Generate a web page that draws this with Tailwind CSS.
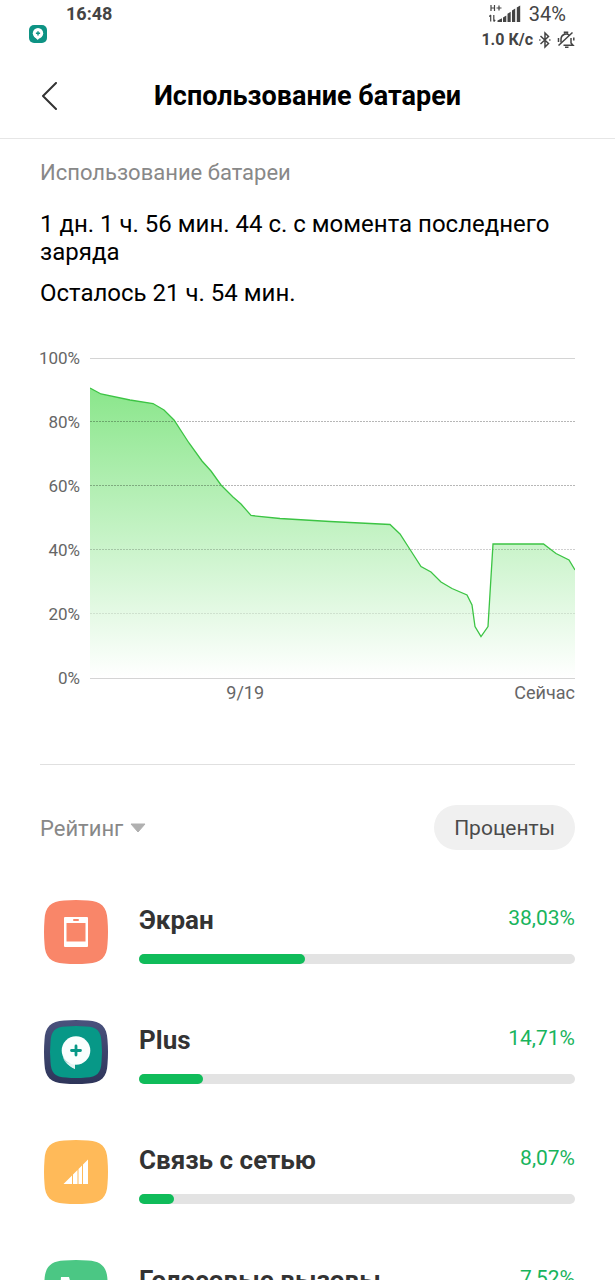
<!DOCTYPE html>
<html lang="ru">
<head>
  <meta charset="UTF-8" />
  <meta name="viewport" content="width=device-width, initial-scale=1" />
  <title>Использование батареи</title>
  <script src="https://cdn.jsdelivr.net/npm/@tailwindcss/browser@4"></script>
</head>
<body class="bg-white font-['Roboto',sans-serif] text-black h-screen flex flex-col overflow-hidden">

  <!-- Status bar -->
  <div class="flex justify-between pl-7 pr-10 pt-1 h-14 shrink-0 text-[#444]">
    <div>
      <p class="pl-[38px] text-lg leading-5 font-bold">16:48</p>
      <svg class="w-5 h-5" viewBox="0 0 20 20">
        <rect x="1" y="1" width="18" height="18" rx="5" fill="#0e9384" />
        <circle cx="10" cy="9.3" r="5.2" fill="#fff" />
        <path d="M6 12l3.7 4 2.5-3z" fill="#fff" />
        <path d="M10 7.2v4.2M7.9 9.3h4.2" stroke="#0e9384" stroke-width="1.4" />
      </svg>
    </div>
    <div class="flex flex-col items-end gap-1">
      <div class="flex items-center gap-2 pr-[9px]">
        <svg class="w-8 h-5" viewBox="0 0 32 20" fill="#444">
          <path d="M2 1v6M5.500 1v6M2 4h3.500M7.500 4h5M10 1.500v5" fill="none" stroke="#444" stroke-width="1.200" />
          <path d="M1.700 17.500V11M.3 12.700L1.700 11M4.800 11v6.500M6.200 15.800l-1.400 1.700" fill="none" stroke="#444" stroke-width="1.200" />
          <path d="M8.500 18v-1.500l4.500-2.300V18zM14 18v-4.500l3.300-2V18zM18.500 18V9.800l3.200-2V18zM23 18V6.500l3.200-2V18zM27.800 18V3.500l3.400-2V18z" />
        </svg>
        <span class="text-xl leading-5">34%</span>
      </div>
      <div class="flex items-center">
        <span class="text-base leading-6 font-bold">1.0 К/с</span>
        <svg class="ml-1 w-4 h-5" viewBox="0 0 16 20" fill="none" stroke="#444" stroke-width="1.5">
          <path d="M3.5 6l8 7.500L8 17V3l3.500 3.500-8 7.500" />
          <path d="M2.800 10h.1M12.800 10h.1" stroke-linecap="round" stroke-width="1.600" />
        </svg>
        <svg class="w-[18px] h-5 ml-1" viewBox="0 0 18 20" fill="none" stroke="#444" stroke-width="1.500">
          <path d="M4 12.500V9a5 5 0 0 1 8.500-3.500M14 8v5l2 2.200H6.500M7.500 3.500V2.300h3v1.200M8 17.300h3.500" />
          <path d="M1.500 15.500L15.500 2.500M1.500 8v4M16.800 7.500v3" />
        </svg>
      </div>
    </div>
  </div>

  <!-- Header -->
  <header class="relative flex items-center justify-center h-[83px] pb-[2px] shrink-0 border-b border-[#e6e6e6]">
    <button type="button" aria-label="Назад" class="absolute left-10 p-0 cursor-pointer">
      <svg class="w-5 h-7" viewBox="0 0 20 28" fill="none" stroke="#333" stroke-width="2" stroke-linecap="round" stroke-linejoin="round">
        <path d="M16 1L3 14l13 13" />
      </svg>
    </button>
    <h1 class="text-[27px] leading-8 font-bold">Использование батареи</h1>
  </header>

  <main class="flex-1 min-h-0 overflow-y-auto [scrollbar-width:none] px-10">
    <h2 class="mt-5 text-[22px] leading-7 text-[#888]">Использование батареи</h2>
    <p class="mt-[23px] text-2xl leading-7">1 дн. 1 ч. 56 мин. 44 с. с момента последнего заряда</p>
    <p class="mt-[13px] text-2xl leading-7">Осталось 21 ч. 54 мин.</p>

    <!-- Battery chart -->
    <section class="mt-[41px] grid grid-cols-[40px_1fr] gap-x-[10px]">
      <div class="flex flex-col gap-11 items-end text-[17px] leading-5 text-[#666]">
        <span>100%</span>
        <span>80%</span>
        <span>60%</span>
        <span>40%</span>
        <span>20%</span>
        <span>0%</span>
      </div>
      <div class="pt-[10px]">
        <svg class="w-full h-[321px]" viewBox="0 0 485 321" preserveAspectRatio="none">
          <defs>
            <linearGradient id="fill" gradientUnits="userSpaceOnUse" x1="0" y1="30" x2="0" y2="320">
              <stop offset="0" stop-color="#8ae68b" />
              <stop offset="1" stop-color="#ffffff" />
            </linearGradient>
          </defs>
          <path fill="url(#fill)" d="M0 30L11 36L40 42L63 45.5L74 52L84 62L99 85L112 103L121 113L131 127L143 139L151 146L161 157.5L190 160.5L240 163.5L300 166.5L310 176L321 193L331 208.5L341 214L351 224L362 230.5L377 237L382 247L385 268.5L391 278.5L398 268.5L403 186H453.5L466 195.5L479 202L485 212V320H0z" />
          <g fill="none" stroke-width="1">
            <path stroke="#d4d4d4" d="M0 .5H485M0 320.5H485" />
            <g stroke-dasharray="2 1">
              <path stroke="#00000048" d="M0 63.5H485M0 127.5H485" />
              <path stroke="#00000030" d="M0 191.5H485" />
              <path stroke="#00000018" d="M0 255.5H485" />
            </g>
          </g>
          <path fill="none" stroke="#3cc444" stroke-width="1.3" d="M0 30L11 36L40 42L63 45.5L74 52L84 62L99 85L112 103L121 113L131 127L143 139L151 146L161 157.5L190 160.5L240 163.5L300 166.5L310 176L321 193L331 208.5L341 214L351 224L362 230.5L377 237L382 247L385 268.5L391 278.5L398 268.5L403 186H453.5L466 195.5L479 202L485 212" />
        </svg>
        <div class="mt-[2px] grid grid-cols-[64%_36%] text-lg leading-6 text-[#666]">
          <span class="text-center">9/19</span>
          <span class="text-right">Сейчас</span>
        </div>
      </div>
    </section>

    <hr class="mt-[59px] border-[#e0e0e0]" />

    <div class="mt-10 flex items-center justify-between">
      <div class="relative flex items-center">
        <select aria-label="Сортировка" class="appearance-none bg-transparent pt-[2px] pr-6 text-[22px] leading-7 text-[#888] cursor-pointer">
          <option>Рейтинг</option>
        </select>
        <svg class="absolute right-[2px] w-4 h-[10px] pointer-events-none" viewBox="0 0 16 10">
          <path d="M1 1h14L8 9z" fill="#b0b0b0" stroke="#b0b0b0" stroke-linejoin="round" />
        </svg>
      </div>
      <button type="button" class="rounded-full bg-[#f0f0f0] px-5 pt-[9px] pb-2 text-[21px] leading-7 text-[#4a4a4a] cursor-pointer">Проценты</button>
    </div>

    <!-- Consumers -->
    <ul class="mt-[22px]">
      <li class="flex items-center h-[120px] pl-1">
        <svg class="w-16 h-16 shrink-0" viewBox="0 0 64 64">
          <path d="M20 .5Q32-.5 44 .5C57 1 63 7 63.500 20Q64.500 32 63.500 44C63 57 57 63 44 63.500Q32 64.500 20 63.500C7 63 1 57 .5 44Q-.5 32 .5 20C1 7 7 1 20 .5z" fill="#f98669" />
          <rect x="20" y="17" width="24" height="30" rx="1" fill="#fff" />
          <rect x="22.5" y="23" width="19" height="18.5" fill="#f98669" />
          <rect x="29" y="19" width="6" height="2" rx="1" fill="#f98669" />
        </svg>
        <div class="ml-[31px] pt-[3px] flex-1">
          <div class="flex justify-between">
            <span class="text-[26px] leading-8 font-bold text-[#333]">Экран</span>
            <span class="text-[21px] leading-7 text-[#18b45c]">38,03%</span>
          </div>
          <div role="progressbar" aria-label="Экран" aria-valuenow="38" class="mt-[18px] h-[10px] rounded-full bg-[#e3e3e3]">
            <div class="h-full rounded-full bg-[#10bc5a]" style="width: 38.03%"></div>
          </div>
        </div>
      </li>
      <li class="flex items-center h-[120px] pl-1">
        <svg class="w-16 h-16 shrink-0" viewBox="0 0 64 64">
          <defs>
            <linearGradient id="navy" x1="0" y1="0" x2="0" y2="1">
              <stop offset="0" stop-color="#4a527d" />
              <stop offset="1" stop-color="#2e355a" />
            </linearGradient>
          </defs>
          <path d="M20 .5Q32-.5 44 .5C57 1 63 7 63.500 20Q64.500 32 63.500 44C63 57 57 63 44 63.500Q32 64.500 20 63.500C7 63 1 57 .5 44Q-.5 32 .5 20C1 7 7 1 20 .5z" fill="url(#navy)" />
          <path d="M22 6.500Q32 5.500 42 6.500C53 7 57 11 57.500 22Q58.500 32 57.500 42C57 53 53 57 42 57.500Q32 58.500 22 57.500C11 57 7 53 6.500 42Q5.500 32 6.500 22C7 11 11 7 22 6.500z" fill="#079887" />
          <path d="M19 37c1 5 5 8 12 12v-6z" fill="#b5dcd8" />
          <path d="M22 42c3 1.5 6 2 9 2v5c-4-1.5-7-4-9-7z" fill="#e2f3f1" />
          <circle cx="32" cy="30.5" r="14.3" fill="#fafefe" />
          <path d="M32 26v9M27.500 30.500h9" stroke="#079887" stroke-width="2.8" stroke-linecap="round" />
        </svg>
        <div class="ml-[31px] pt-[3px] flex-1">
          <div class="flex justify-between">
            <span class="text-[26px] leading-8 font-bold text-[#333]">Plus</span>
            <span class="text-[21px] leading-7 text-[#18b45c]">14,71%</span>
          </div>
          <div role="progressbar" aria-label="Plus" aria-valuenow="15" class="mt-[18px] h-[10px] rounded-full bg-[#e3e3e3]">
            <div class="h-full rounded-full bg-[#10bc5a]" style="width: 14.71%"></div>
          </div>
        </div>
      </li>
      <li class="flex items-center h-[120px] pl-1">
        <svg class="w-16 h-16 shrink-0" viewBox="0 0 64 64">
          <path d="M20 .5Q32-.5 44 .5C57 1 63 7 63.500 20Q64.500 32 63.500 44C63 57 57 63 44 63.500Q32 64.500 20 63.500C7 63 1 57 .5 44Q-.5 32 .5 20C1 7 7 1 20 .5z" fill="#ffba59" />
          <path d="M19.500 44l8.500-8.500V44zM29 44v-9.500l4.500-4.500v14zM34.500 44V29l3.500-3.500V44zM39 44V24.500l5-5V44z" fill="#fff" />
        </svg>
        <div class="ml-[31px] pt-[3px] flex-1">
          <div class="flex justify-between">
            <span class="text-[26px] leading-8 font-bold text-[#333]">Связь с сетью</span>
            <span class="text-[21px] leading-7 text-[#18b45c]">8,07%</span>
          </div>
          <div role="progressbar" aria-label="Связь с сетью" aria-valuenow="8" class="mt-[18px] h-[10px] rounded-full bg-[#e3e3e3]">
            <div class="h-full rounded-full bg-[#10bc5a]" style="width: 8.07%"></div>
          </div>
        </div>
      </li>
      <li class="flex items-center h-[120px] pl-1">
        <svg class="w-16 h-16 shrink-0" viewBox="0 0 64 64">
          <path d="M20 .5Q32-.5 44 .5C57 1 63 7 63.500 20Q64.500 32 63.500 44C63 57 57 63 44 63.500Q32 64.500 20 63.500C7 63 1 57 .5 44Q-.5 32 .5 20C1 7 7 1 20 .5z" fill="#4bc784" />
          <path d="M17 17h8l2 7-4 4c2 5 6 9 11 11l4-4 8 2v8c-16 2-31-12-29-28z" fill="#fff" />
        </svg>
        <div class="ml-[31px] pt-[3px] flex-1">
          <div class="flex justify-between">
            <span class="text-[26px] leading-8 font-bold text-[#333]">Голосовые вызовы</span>
            <span class="text-[21px] leading-7 text-[#18b45c]">7,52%</span>
          </div>
          <div role="progressbar" aria-label="Голосовые вызовы" aria-valuenow="8" class="mt-[18px] h-[10px] rounded-full bg-[#e3e3e3]">
            <div class="h-full rounded-full bg-[#10bc5a]" style="width: 7.52%"></div>
          </div>
        </div>
      </li>
    </ul>
  </main>

</body>
</html>
